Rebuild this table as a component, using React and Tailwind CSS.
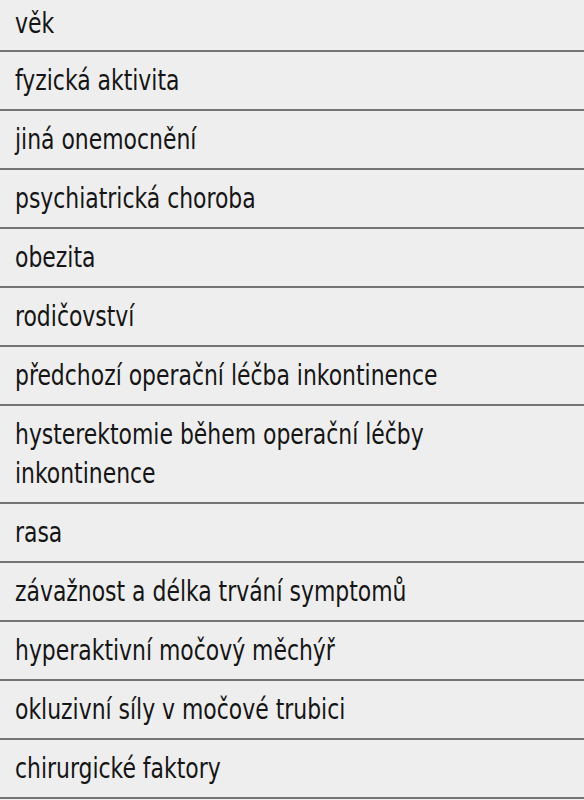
import React from "react";

const rows = [
  "věk",
  "fyzická aktivita",
  "jiná onemocnění",
  "psychiatrická choroba",
  "obezita",
  "rodičovství",
  "předchozí operační léčba inkontinence",
  "hysterektomie během operační léčby inkontinence",
  "rasa",
  "závažnost a délka trvání symptomů",
  "hyperaktivní močový měchýř",
  "okluzivní síly v močové trubici",
  "chirurgické faktory",
];

export default function App() {
  return (
    <div
      className="w-[584px] h-[800px] overflow-hidden bg-[#eeeeee] text-[#151515]"
      style={{ fontFamily: '"DejaVu Sans Condensed", "Liberation Sans", sans-serif' }}
    >
      {rows.map((r, i) => (
        <div
          key={i}
          className={`border-b-2 border-[#747474] pl-[15px] text-[28px] leading-[39px] ${
            i === 0 ? "pt-[4px] pb-[7px]" : "py-[9px]"
          }`}
        >
          <div className="w-[500px] origin-left scale-x-[0.87]">{r}</div>
        </div>
      ))}
    </div>
  );
}
